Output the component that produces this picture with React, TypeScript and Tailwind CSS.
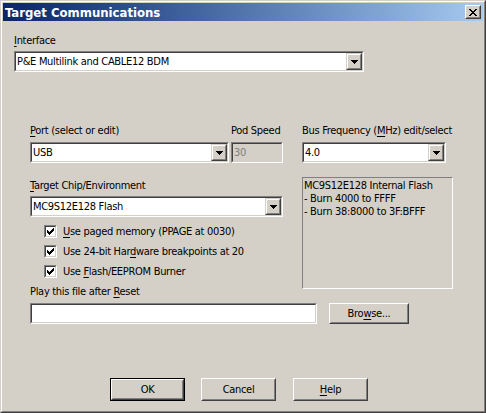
import React from 'react'

function Sunken({ className = '', inner = 'bg-white', children }: { className?: string; inner?: string; children?: React.ReactNode }) {
  return (
    <div className={`border border-t-[#808080] border-l-[#808080] border-b-white border-r-white ${className}`}>
      <div className={`h-full border border-t-[#404040] border-l-[#404040] border-b-[#d4d0c8] border-r-[#d4d0c8] ${inner}`}>
        {children}
      </div>
    </div>
  )
}

function Raised({ className = '', children }: { className?: string; children?: React.ReactNode }) {
  return (
    <div className={`border border-t-white border-l-white border-b-[#404040] border-r-[#404040] bg-[#d4d0c8] ${className}`}>
      <div className="flex h-full items-center justify-center border border-t-[#d4d0c8] border-l-[#d4d0c8] border-b-[#808080] border-r-[#808080]">
        {children}
      </div>
    </div>
  )
}

function Arrow() {
  return (
    <svg width="7" height="4" viewBox="0 0 7 4" shapeRendering="crispEdges">
      <path d="M0 0h7v1h-7z M1 1h5v1h-5z M2 2h3v1h-3z M3 3h1v1h-1z" fill="#000" />
    </svg>
  )
}

function Combo({ value, className = '' }: { value: string; className?: string }) {
  return (
    <Sunken className={`h-[21px] ${className}`}>
      <div className="flex h-full items-center">
        <span className="flex-1 pl-[1px] leading-[13px]">{value}</span>
        <div className="h-full border border-t-[#d4d0c8] border-l-[#d4d0c8] border-b-[#404040] border-r-[#404040] bg-[#d4d0c8]">
          <div className="flex h-full w-[14px] items-center justify-center border border-t-white border-l-white border-b-[#808080] border-r-[#808080]">
            <Arrow />
          </div>
        </div>
      </div>
    </Sunken>
  )
}

function Check({ children }: { children: React.ReactNode }) {
  return (
    <div className="flex h-[20px] items-center gap-[6px] pl-[14px]">
      <Sunken className="h-[13px] w-[13px]">
        <div className="flex h-full items-center justify-center">
          <svg width="7" height="7" viewBox="0 0 7 7" shapeRendering="crispEdges">
            <path
              d="M6 0h1v1h-1z M5 1h2v1h-2z M0 2h1v1h-1z M4 2h3v1h-3z M0 3h2v1h-2z M3 3h3v1h-3z M0 4h5v1h-5z M1 5h3v1h-3z M2 6h1v1h-1z"
              fill="#000"
            />
          </svg>
        </div>
      </Sunken>
      <span className="leading-[13px]">{children}</span>
    </div>
  )
}

function Label({ children, className = '' }: { children: React.ReactNode; className?: string }) {
  return <div className={`h-[13px] leading-[13px] whitespace-nowrap ${className}`}>{children}</div>
}

const U = ({ children }: { children: React.ReactNode }) => <span className="underline underline-offset-[2px]">{children}</span>

export default function App() {
  return (
    <div className="h-[413px] w-[486px] bg-[#d4d0c8] font-['DejaVu_Sans_Condensed','Liberation_Sans',sans-serif] text-[11px] tracking-[-0.3px] text-black">
      <div className="h-full border border-t-[#d4d0c8] border-l-[#d4d0c8] border-b-[#404040] border-r-[#404040]">
        <div className="flex h-full flex-col border border-t-white border-l-white border-b-[#808080] border-r-[#808080] p-[1px]">
          {/* Title bar */}
          <div className="flex h-[18px] items-center bg-gradient-to-r from-[#0a246a] to-[#a6caf0] pl-[2px] pr-[2px]">
            <span className="flex-1 text-[13px] font-bold leading-[15px] tracking-normal text-white">Target Communications</span>
            <Raised className="h-[14px] w-[16px]">
              <svg width="8" height="7" viewBox="0 0 8 7" shapeRendering="crispEdges">
                <path
                  d="M0 0h2v1h-2z M6 0h2v1h-2z M1 1h2v1h-2z M5 1h2v1h-2z M2 2h4v1h-4z M3 3h2v1h-2z M2 4h4v1h-4z M1 5h2v1h-2z M5 5h2v1h-2z M0 6h2v1h-2z M6 6h2v1h-2z"
                  fill="#000"
                />
              </svg>
            </Raised>
          </div>

          {/* Body */}
          <div className="flex flex-col pl-[11px]">
            <Label className="mt-[13px]">
              <U>I</U>nterface
            </Label>
            <Combo value="P&E Multilink and CABLE12 BDM" className="mt-[4px] w-[350px]" />

            <div className="ml-[16px] mt-[52px] flex gap-[18px]">
              {/* Left column */}
              <div className="flex w-[254px] flex-col">
                <div className="flex gap-[2px]">
                  <div className="flex w-[199px] flex-col">
                    <Label>
                      <U>P</U>ort (select or edit)
                    </Label>
                    <Combo value="USB" className="mt-[5px]" />
                  </div>
                  <div className="flex w-[52px] flex-col">
                    <Label>Pod Speed</Label>
                    <Sunken className="mt-[5px] h-[21px]" inner="bg-[#d4d0c8]">
                      <div className="flex h-full items-center pl-[1px] leading-[13px] text-[#808080]">30</div>
                    </Sunken>
                  </div>
                </div>
                <Label className="mt-[16px]">
                  <U>T</U>arget Chip/Environment
                </Label>
                <Combo value="MC9S12E128 Flash" className="mt-[4px] w-[253px]" />
                <div className="mt-[4px] flex flex-col">
                  <Check>
                    <U>U</U>se paged memory (PPAGE at 0030)
                  </Check>
                  <Check>
                    Use 24-bit Har<U>d</U>ware breakpoints at 20
                  </Check>
                  <Check>
                    Use <U>F</U>lash/EEPROM Burner
                  </Check>
                </div>
                <Label className="mt-[4px]">
                  Play this file after <U>R</U>eset
                </Label>
              </div>

              {/* Right column */}
              <div className="flex w-[151px] flex-col">
                <Label>
                  Bus Frequency (<U>M</U>Hz) edit/select
                </Label>
                <Combo value="4.0" className="mt-[5px] w-[144px]" />
                <div className="mt-[14px] h-[112px] border border-t-[#808080] border-l-[#808080] border-b-white border-r-white pl-[1px] pt-[1px] leading-[13px]">
                  <div>MC9S12E128 Internal Flash</div>
                  <div>- Burn 4000 to FFFF</div>
                  <div>- Burn 38:8000 to 3F:BFFF</div>
                </div>
              </div>
            </div>

            <div className="ml-[16px] mt-[5px] flex items-center gap-[12px]">
              <Sunken className="h-[21px] w-[287px]" />
              <Raised className="h-[21px] w-[80px]">
                <span className="leading-[13px]">
                  Bro<U>w</U>se...
                </span>
              </Raised>
            </div>

            <div className="ml-[96px] mt-[54px] flex gap-[16px]">
              <div className="h-[23px] w-[75px] border border-black">
                <Raised className="h-full">
                  <span className="leading-[13px]">OK</span>
                </Raised>
              </div>
              <Raised className="h-[23px] w-[75px]">
                <span className="leading-[13px]">Cancel</span>
              </Raised>
              <Raised className="ml-[1px] h-[23px] w-[75px]">
                <span className="leading-[13px]">
                  <U>H</U>elp
                </span>
              </Raised>
            </div>
          </div>
        </div>
      </div>
    </div>
  )
}
